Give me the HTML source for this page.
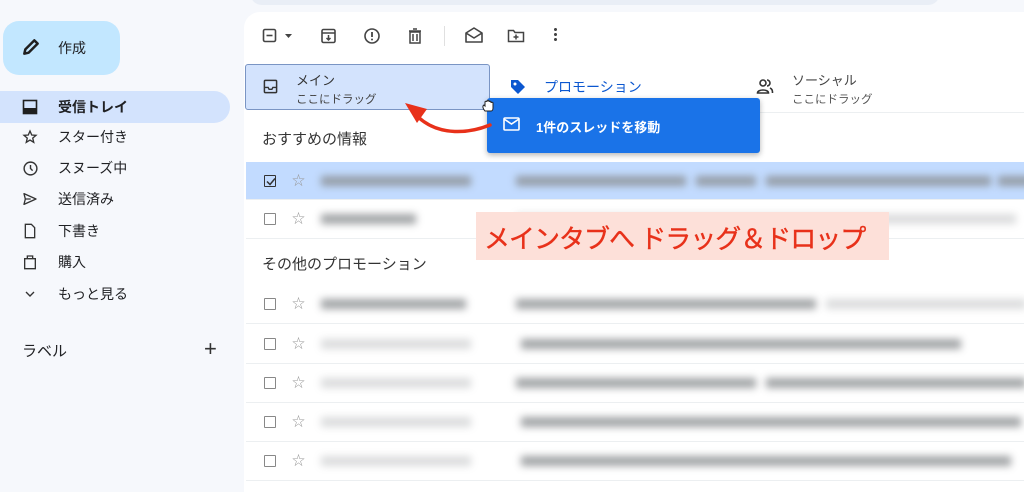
<!DOCTYPE html>
<html><head><meta charset="utf-8"><style>
*{margin:0;padding:0;box-sizing:border-box}
body{width:1024px;height:483px;overflow:hidden;background:#f6f8fc;font-family:"Liberation Sans","Noto Sans CJK JP",sans-serif;position:relative;color:#202124}
.abs{position:absolute}
.nav{position:absolute;left:0;width:230px;height:32px;display:flex;align-items:center;font-size:14px;color:#202124}
.nav svg{position:absolute;left:22px}
.nav span{position:absolute;left:58px}
.row{position:absolute;left:246px;width:778px;height:39px;border-bottom:1px solid #eceff1}
.cb{position:absolute;left:18px;top:13px;width:12px;height:12px;border:1.5px solid #888;border-radius:1px}
.star{position:absolute;left:46px;top:11px;font-size:13px;line-height:16px;color:#999}
.bl{position:absolute;height:10px;background:#8a8d90;filter:blur(4px);opacity:.8;top:14px}
.blt{opacity:.3}
</style></head><body>
<div class="abs" style="left:250px;top:-20px;width:690px;height:25px;background:#e9eef6;border-radius:12px"></div>
<div class="abs" style="left:244px;top:12px;width:790px;height:480px;background:#fff;border-radius:16px 0 0 0"></div>
<div class="abs" style="left:3px;top:21px;width:117px;height:54px;background:#c2e7ff;border-radius:16px"></div>
<svg class="abs" style="left:21px;top:37px" width="20" height="20" viewBox="0 0 24 24"><path d="M4 20l1.2-5.2L16 4l4 4L9.2 18.8z" fill="none" stroke="#1f1f1f" stroke-width="3" stroke-linejoin="round"/></svg>
<div class="abs" style="left:58px;top:38px;font-size:14px">作成</div>
<div class="abs" style="left:0;top:91px;width:230px;height:32px;background:#d3e3fd;border-radius:0 16px 16px 0"></div>
<div class="nav" style="top:91px;font-weight:bold"><svg width="16" height="16" viewBox="0 0 16 16"><rect x="1.5" y="1.5" width="13" height="13" fill="none" stroke="#1f1f1f" stroke-width="1.6"/><rect x="1.5" y="9" width="13" height="5.5" fill="#1f1f1f"/></svg><span>受信トレイ</span></div>
<div class="nav" style="top:121px"><svg width="16" height="16" viewBox="0 0 24 24"><path d="M12 3l2.6 6 6.4.5-4.9 4.2 1.5 6.3L12 16.6 6.4 20l1.5-6.3L3 9.5 9.4 9z" fill="none" stroke="#333" stroke-width="2"/></svg><span>スター付き</span></div>
<div class="nav" style="top:152px"><svg width="17" height="17" viewBox="0 0 24 24"><circle cx="12" cy="12" r="9" fill="none" stroke="#333" stroke-width="2"/><path d="M12 7v5l3 3" fill="none" stroke="#333" stroke-width="2"/></svg><span>スヌーズ中</span></div>
<div class="nav" style="top:183px"><svg width="16" height="16" viewBox="0 0 24 24"><path d="M3 4l18 8-18 8 2-8z M5 12h8" fill="none" stroke="#333" stroke-width="2" stroke-linejoin="round"/></svg><span>送信済み</span></div>
<div class="nav" style="top:215px"><svg width="16" height="16" viewBox="0 0 24 24"><path d="M5 2h9l5 5v15H5z" fill="none" stroke="#333" stroke-width="2"/></svg><span>下書き</span></div>
<div class="nav" style="top:246px"><svg width="16" height="16" viewBox="0 0 24 24"><path d="M4 7h16v15H4z M8 7V3h8v4" fill="none" stroke="#333" stroke-width="2"/></svg><span>購入</span></div>
<div class="nav" style="top:278px"><svg width="16" height="16" viewBox="0 0 24 24"><path d="M6 9l6 6 6-6" fill="none" stroke="#333" stroke-width="2"/></svg><span>もっと見る</span></div>
<div class="abs" style="left:22px;top:340px;font-size:15px">ラベル</div>
<div class="abs" style="left:204px;top:336px;font-size:22px;color:#333;font-weight:300">+</div>
<svg class="abs" style="left:262px;top:27px" width="40" height="18" viewBox="0 0 40 18"><rect x="1.5" y="2.5" width="12" height="12" rx="1.5" fill="none" stroke="#444" stroke-width="1.6"/><path d="M4.5 8.5h6" stroke="#444" stroke-width="1.6"/><path d="M23 7l3.5 4 3.5-4z" fill="#444"/></svg>
<svg class="abs" style="left:320px;top:27px" width="18" height="18" viewBox="0 0 18 18"><rect x="2" y="2.5" width="13" height="13" rx="1.5" fill="none" stroke="#444" stroke-width="1.6"/><path d="M2 6h13 M8.5 8v5 M6.5 11l2 2 2-2" fill="none" stroke="#444" stroke-width="1.5"/></svg>
<svg class="abs" style="left:363px;top:27px" width="18" height="18" viewBox="0 0 18 18"><circle cx="9" cy="9" r="7" fill="none" stroke="#444" stroke-width="1.6"/><path d="M9 5v5" stroke="#444" stroke-width="1.8"/><circle cx="9" cy="12.5" r="1" fill="#444"/></svg>
<svg class="abs" style="left:406px;top:27px" width="18" height="18" viewBox="0 0 18 18"><path d="M4 5h10v11H4z M3 4h12 M7 2h4 M7 7v7 M11 7v7" fill="none" stroke="#444" stroke-width="1.5"/></svg>
<div class="abs" style="left:444px;top:26px;width:1px;height:20px;background:#e0e0e0"></div>
<svg class="abs" style="left:464px;top:26px" width="20" height="18" viewBox="0 0 20 18"><path d="M2 7l8-5 8 5v9H2z M2 7l8 5 8-5" fill="none" stroke="#444" stroke-width="1.6" stroke-linejoin="round"/></svg>
<svg class="abs" style="left:507px;top:27px" width="18" height="18" viewBox="0 0 18 18"><path d="M1.5 3.5h5l1.5 2h8.5v9h-15z M9 7.5v5 M6.5 10h5" fill="none" stroke="#444" stroke-width="1.5"/></svg>
<div class="abs" style="left:554px;top:27px;width:3px;height:15px;background:radial-gradient(circle,#444 1.4px,transparent 1.6px) 0 0/3px 5px"></div>
<div class="abs" style="left:245px;top:64px;width:245px;height:46px;background:#d3e3fd;border:1px solid #7a95c4;border-radius:3px"></div>
<svg class="abs" style="left:263px;top:79px" width="15" height="15" viewBox="0 0 16 16"><rect x="1.5" y="1.5" width="13" height="13" rx="1" fill="none" stroke="#333" stroke-width="1.6"/><path d="M1.5 9h4l1 2h3l1-2h4" fill="none" stroke="#333" stroke-width="1.5"/></svg>
<div class="abs" style="left:296px;top:70px;font-size:13px;color:#333">メイン</div>
<div class="abs" style="left:296px;top:91px;font-size:11.5px;color:#444">ここにドラッグ</div>
<svg class="abs" style="left:509px;top:78px" width="18" height="18" viewBox="0 0 18 18"><path d="M2 2h7l7 7-7 7-7-7z" fill="#0b57d0"/><circle cx="6" cy="6" r="1.5" fill="#fff"/></svg>
<div class="abs" style="left:544px;top:77px;font-size:14px;color:#0b57d0">プロモーション</div>
<svg class="abs" style="left:756px;top:78px" width="18" height="16" viewBox="0 0 18 16"><circle cx="7" cy="5" r="3" fill="none" stroke="#333" stroke-width="1.6"/><path d="M1.5 15c0-4 11-4 11 0z M11 2a3 3 0 010 6 M14 10c2 1 2.5 2 2.5 5" fill="none" stroke="#333" stroke-width="1.6"/></svg>
<div class="abs" style="left:792px;top:70px;font-size:13px;color:#444">ソーシャル</div>
<div class="abs" style="left:792px;top:91px;font-size:11.5px;color:#555">ここにドラッグ</div>
<div class="abs" style="left:490px;top:112px;width:534px;height:1px;background:#eceff1"></div>
<div class="abs" style="left:262px;top:128px;font-size:15px;color:#333">おすすめの情報</div>
<div class="row" style="top:162px;background:#c2dbff;height:38px"><div class="cb" style="border-color:#333"></div><svg class="abs" style="left:20px;top:15px" width="10" height="9" viewBox="0 0 10 9"><path d="M1 4.5l3 3 5-6" fill="none" stroke="#333" stroke-width="1.5"/></svg><div class="star">☆</div>
<div class="bl" style="left:75px;width:150px"></div><div class="bl" style="left:270px;width:170px"></div><div class="bl" style="left:450px;width:60px"></div><div class="bl" style="left:520px;width:225px"></div><div class="bl" style="left:752px;width:40px"></div></div>
<div class="row" style="top:200px"><div class="cb"></div><div class="star">☆</div><div class="bl" style="left:75px;width:95px"></div><div class="bl blt" style="left:270px;width:500px"></div></div>
<div class="abs" style="left:262px;top:253px;font-size:15px;color:#333">その他のプロモーション</div>
<div class="row" style="top:285px"><div class="cb"></div><div class="star">☆</div><div class="bl" style="left:75px;width:145px"></div><div class="bl" style="left:270px;width:300px"></div><div class="bl blt" style="left:580px;width:200px"></div></div>
<div class="row" style="top:325px"><div class="cb"></div><div class="star">☆</div><div class="bl blt" style="left:75px;width:150px"></div><div class="bl" style="left:275px;width:440px"></div></div>
<div class="row" style="top:364px"><div class="cb"></div><div class="star">☆</div><div class="bl blt" style="left:75px;width:150px"></div><div class="bl" style="left:270px;width:240px"></div><div class="bl" style="left:520px;width:260px"></div></div>
<div class="row" style="top:403px"><div class="cb"></div><div class="star">☆</div><div class="bl blt" style="left:75px;width:150px"></div><div class="bl" style="left:275px;width:500px"></div></div>
<div class="row" style="top:442px"><div class="cb"></div><div class="star">☆</div><div class="bl blt" style="left:75px;width:150px"></div><div class="bl" style="left:275px;width:490px"></div></div>
<div class="abs" style="left:487px;top:98px;width:273px;height:55px;background:#1a73e8;border-radius:3px;box-shadow:0 2px 6px rgba(0,0,0,.3)"></div>
<svg class="abs" style="left:503px;top:117px" width="17" height="14" viewBox="0 0 17 14"><rect x="1" y="1" width="15" height="12" rx="1" fill="none" stroke="#fff" stroke-width="1.6"/><path d="M1 2l7.5 5L16 2" fill="none" stroke="#fff" stroke-width="1.6"/></svg>
<div class="abs" style="left:536px;top:117px;font-size:13px;color:#fff;font-weight:bold">1件のスレッドを移動</div>
<svg class="abs" style="left:481px;top:98px" width="16" height="16" viewBox="0 0 16 16"><path d="M4 13c-2-2-3-5-1-6l1 1V4c0-1 2-1 2 0V3c0-1 2-1 2 0v1c0-1 2-1 2 0v1c0-1 2-1 2 0v5c0 2-1 3-2 3z" fill="#fff" stroke="#222" stroke-width="1"/></svg>
<svg class="abs" style="left:400px;top:95px" width="100" height="50" viewBox="0 0 100 50"><path d="M90 30C70 38 40 42 18 22" fill="none" stroke="#e8311a" stroke-width="3.5" stroke-linecap="round"/><path d="M5 8l22 6-10 14z" fill="#e8311a"/></svg>
<div class="abs" style="left:476px;top:212px;width:413px;height:48px;background:#fde0d9;"></div>
<div class="abs" style="left:484px;top:219px;font-size:26px;color:#e8311a;letter-spacing:-1px;white-space:nowrap;-webkit-text-stroke:0.4px #e8311a">メインタブへ ドラッグ＆ドロップ</div>
</body></html>
